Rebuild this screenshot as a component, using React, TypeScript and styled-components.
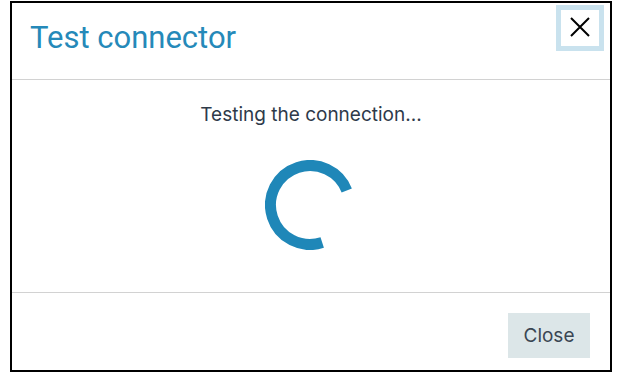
import React from "react";
import styled, { createGlobalStyle } from "styled-components";

const Global = createGlobalStyle`
  html, body { margin: 0; padding: 0; background: #ffffff; }
  body { font-family: Inter, "Noto Sans", sans-serif; }
`;

const Page = styled.div`
  width: 622px;
  height: 375px;
  padding: 1px 0 0 10px;
  box-sizing: border-box;
`;

const Dialog = styled.div`
  width: 602px;
  height: 371px;
  box-sizing: border-box;
  border: 2px solid #000;
  background: #fff;
  display: flex;
  flex-direction: column;
`;

const Header = styled.div`
  height: 77px;
  box-sizing: border-box;
  border-bottom: 1px solid #d2d2d2;
  display: flex;
  justify-content: space-between;
  align-items: flex-start;
`;

const Title = styled.h2`
  margin: 17px 0 0 18px;
  font-family: Roboto, "Liberation Sans", sans-serif;
  font-weight: 400;
  font-size: 31px;
  line-height: 36px;
  color: #2589b9;
`;

const IconButton = styled.button`
  margin: 2px 6px 0 0;
  width: 48px;
  height: 46px;
  box-sizing: border-box;
  border: 5px solid #c9e2ee;
  background: #fff;
  padding: 0 0 3px 0;
  display: flex;
  align-items: center;
  justify-content: center;
  cursor: pointer;
`;

const Body = styled.div`
  flex: 1;
  display: flex;
  flex-direction: column;
  align-items: center;
  padding-top: 22px;
  border-bottom: 1px solid #d2d2d2;
`;

const Message = styled.p`
  margin: 0;
  font-family: Inter, "Noto Sans", sans-serif;
  font-size: 19px;
  line-height: 26px;
  color: #2e3a4a;
`;

const SpinnerWrap = styled.div`
  margin-top: 32px;
  width: 90px;
  height: 90px;
  margin-left: -3px;
`;

const Footer = styled.div`
  height: 77px;
  box-sizing: border-box;
  display: flex;
  justify-content: flex-end;
  align-items: flex-start;
  padding: 20px 20px 0 0;
`;

const Button = styled.button`
  width: 82px;
  height: 45px;
  border: none;
  background: #dce6e8;
  color: #3a4653;
  font-family: Inter, "Noto Sans", sans-serif;
  font-size: 19px;
  padding: 0;
  cursor: pointer;
`;

const Spinner: React.FC = () => {
  const r = 39.5;
  const c = 2 * Math.PI * r;
  const arc = c * (266 / 360);
  return (
    <svg width="90" height="90" viewBox="0 0 90 90">
      <circle
        cx="45"
        cy="45"
        r={r}
        fill="none"
        stroke="#1f87b8"
        strokeWidth="11"
        strokeDasharray={`${arc} ${c}`}
        transform="rotate(72 45 45)"
      />
    </svg>
  );
};

export default function App() {
  return (
    <>
      <Global />
      <Page>
        <Dialog>
          <Header>
            <Title>Test connector</Title>
            <IconButton aria-label="Close">
              <svg width="20" height="20" viewBox="0 0 20 20">
                <path d="M1 1 L19 19 M19 1 L1 19" stroke="#000" strokeWidth="2" fill="none" />
              </svg>
            </IconButton>
          </Header>
          <Body>
            <Message>Testing the connection...</Message>
            <SpinnerWrap>
              <Spinner />
            </SpinnerWrap>
          </Body>
          <Footer>
            <Button>Close</Button>
          </Footer>
        </Dialog>
      </Page>
    </>
  );
}
